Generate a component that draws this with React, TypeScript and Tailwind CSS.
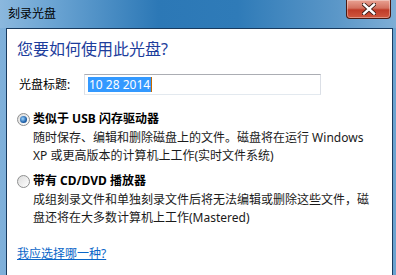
const font = { fontFamily: '"Segoe UI", "Noto Sans", "Noto Sans CJK SC", sans-serif' }

function Radio({ checked }: { checked?: boolean }) {
  return (
    <span className="relative mt-[2px] flex h-[13px] w-[13px] shrink-0 items-center justify-center rounded-full border border-[#8e8f8f] bg-gradient-to-br from-[#dcdcdc] to-[#ffffff]">
      {checked && (
        <span className="h-[7px] w-[7px] rounded-full bg-[radial-gradient(circle_at_40%_40%,#9fd6ff,#1d5fa8_60%,#0b3a78)]" />
      )}
    </span>
  )
}

function Option({
  checked,
  title,
  lines,
}: {
  checked?: boolean
  title: string
  lines: string[]
}) {
  return (
    <div className="flex gap-[3px]">
      <Radio checked={checked} />
      <div className="flex flex-col">
        <span className="text-[12px] leading-[16px] font-bold text-black">{title}</span>
        <div className="mt-[2px] flex flex-col text-[12px] leading-[18px] text-[#1a1a1a]">
          {lines.map((l) => (
            <span key={l}>{l}</span>
          ))}
        </div>
      </div>
    </div>
  )
}

export default function App() {
  return (
    <div
      className="flex h-[275px] w-[396px] flex-col overflow-hidden bg-gradient-to-r from-[#7fb0da] via-[#3d86c2] to-[#6aa3d0]"
      style={font}
    >
      {/* title bar */}
      <div className="flex h-[28px] shrink-0 items-start justify-between bg-[linear-gradient(90deg,#8bb8de_0%,#6ea6d4_12%,#2c78b6_40%,#2f7bb8_60%,#5b97c8_85%,#7eaed6_100%)]">
        <span className="pl-[8px] pt-[6px] text-[12px] leading-[16px] text-black">刻录光盘</span>
        <div className="mr-[5px] flex h-[19px] w-[45px] items-center justify-center rounded-b-[4px] border border-t-0 border-[#4a1a12] bg-[linear-gradient(180deg,#e9a293_0%,#d3715f_45%,#bf3b28_55%,#d0583f_100%)] shadow-[inset_0_0_0_1px_rgba(255,255,255,0.35)]">
          <svg width="14" height="12" viewBox="0 0 14 12">
            <path d="M2 1.5 L12 10.5 M12 1.5 L2 10.5" stroke="#3a1a14" strokeWidth="4.2" strokeLinecap="square" />
            <path d="M2 1.5 L12 10.5 M12 1.5 L2 10.5" stroke="#ffffff" strokeWidth="2.4" strokeLinecap="square" />
          </svg>
        </div>
      </div>

      {/* client */}
      <div className="ml-[6px] mr-[3px] flex flex-1 flex-col border border-b-0 border-[#183a5e] bg-white pl-[10px] pt-[10px]">
        <h1 className="text-[16px] leading-[21px] text-[#1d3d9c]">您要如何使用此光盘?</h1>

        <div className="mt-[14px] flex items-center">
          <span className="w-[67px] pl-[2px] text-[12px] leading-[16px] text-black">光盘标题:</span>
          <div className="flex h-[21px] w-[237px] items-center border border-[#abadb3] border-x-[#dbdfe6] border-b-[#e3e9ef] pl-[3px]">
            <span className="bg-[#3399ff] px-[1px] text-[12px] leading-[15px] text-white">10 28 2014</span>
            <span className="h-[15px] w-px bg-[#c46a00]" />
          </div>
        </div>

        <div className="mt-[16px] flex flex-col gap-[8px]">
          <Option
            checked
            title="类似于 USB 闪存驱动器"
            lines={['随时保存、编辑和删除磁盘上的文件。磁盘将在运行 Windows', 'XP 或更高版本的计算机上工作(实时文件系统)']}
          />
          <Option
            title="带有 CD/DVD 播放器"
            lines={['成组刻录文件和单独刻录文件后将无法编辑或删除这些文件，磁', '盘还将在大多数计算机上工作(Mastered)']}
          />
        </div>

        <a className="mt-[19px] w-fit text-[12px] leading-[16px] text-[#0a66c8] underline">我应选择哪一种?</a>
      </div>
    </div>
  )
}
